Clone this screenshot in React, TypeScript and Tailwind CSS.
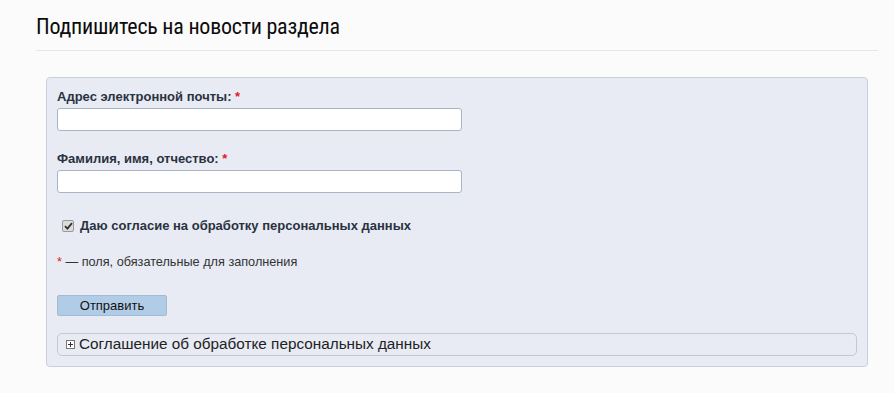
import React from 'react';

const Req = () => <span className="text-[#e02020]">*</span>;

export default function App() {
  return (
    <div className="min-h-[393px] w-[894px] bg-[#fbfbfc] font-['Liberation_Sans',Arial,sans-serif] text-[#222]">
      <div className="pl-[36px] pr-[16px] pt-[12px]">
        <h1 className="border-b border-[#e6e6e9] pb-[9px] font-['Liberation_Sans_Narrow','Roboto_Condensed','Open_Sans',sans-serif] text-[22px] leading-[29px] tracking-[-0.25px] text-[#0c0c0c]">
          Подпишитесь на новости раздела
        </h1>
      </div>

      <div className="ml-[46px] mt-[26px] w-[822px] rounded-[4px] border border-[#c9d0dc] bg-[#e8ebf4] px-[10px] pb-[10px] pt-[10px]">
        <label className="block text-[13px] font-bold leading-[18px] text-[#2a3240]">
          Адрес электронной почты: <Req />
        </label>
        <input className="mt-[2px] block h-[23px] w-[405px] rounded-[3px] border border-[#a9b4c6] bg-white" />

        <label className="mt-[19px] block text-[13px] font-bold leading-[18px] text-[#2a3240]">
          Фамилия, имя, отчество: <Req />
        </label>
        <input className="mt-[2px] block h-[23px] w-[405px] rounded-[3px] border border-[#a9b4c6] bg-white" />

        <div className="mt-[24px] flex items-center pl-[5px] text-[13px] font-bold leading-[18px] text-[#2a3240]">
          <span className="flex h-[12px] w-[12px] items-center justify-center rounded-[2px] border border-[#9a9a9a] bg-[#dcdcdc]">
            <svg width="9" height="8" viewBox="0 0 9 8">
              <path d="M1 4.2 L3.4 6.6 L8 1.2" fill="none" stroke="#333" strokeWidth="1.8" />
            </svg>
          </span>
          <span className="ml-[6px]">Даю согласие на обработку персональных данных</span>
        </div>

        <div className="mt-[19px] text-[12.7px] leading-[16px] text-[#333]">
          <Req /> — поля, обязательные для заполнения
        </div>

        <button className="mt-[25px] block h-[21px] w-[110px] rounded-[2px] border border-[#a3bcd6] bg-[#b1cce7] text-[13px] leading-[18px] text-[#111]">
          Отправить
        </button>

        <div className="mt-[17px] flex h-[23px] items-center rounded-[5px] border border-[#c3c8d3] pl-[8px] text-[15.3px] text-[#222]">
          <span className="flex h-[9px] w-[9px] items-center justify-center border border-[#777] bg-white">
            <svg width="7" height="7" viewBox="0 0 7 7">
              <path d="M3.5 1 V6 M1 3.5 H6" stroke="#333" strokeWidth="1" />
            </svg>
          </span>
          <span className="ml-[4px]">Соглашение об обработке персональных данных</span>
        </div>
      </div>
    </div>
  );
}
